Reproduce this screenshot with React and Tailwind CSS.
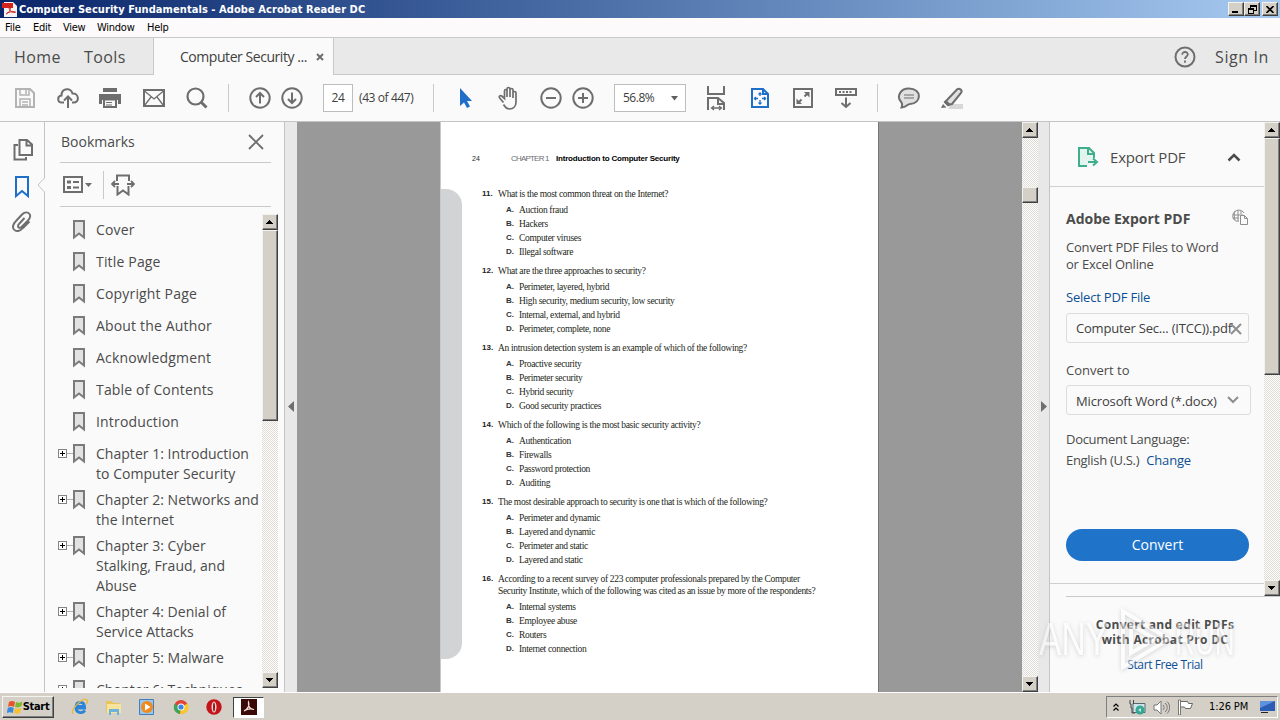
import clsx from 'clsx'

const BOOKMARKS = [
  { lines: ['Cover'] },
  { lines: ['Title Page'] },
  { lines: ['Copyright Page'] },
  { lines: ['About the Author'] },
  { lines: ['Acknowledgment'] },
  { lines: ['Table of Contents'] },
  { lines: ['Introduction'] },
  { lines: ['Chapter 1: Introduction', 'to Computer Security'], children: true },
  { lines: ['Chapter 2: Networks and', 'the Internet'], children: true },
  { lines: ['Chapter 3: Cyber', 'Stalking, Fraud, and', 'Abuse'], children: true },
  { lines: ['Chapter 4: Denial of', 'Service Attacks'], children: true },
  { lines: ['Chapter 5: Malware'], children: true },
  { lines: ['Chapter 6: Techniques'], children: true },
]

const QUESTIONS = [
  {
    n: 11,
    text: ['What is the most common threat on the Internet?'],
    options: ['Auction fraud', 'Hackers', 'Computer viruses', 'Illegal software'],
  },
  {
    n: 12,
    text: ['What are the three approaches to security?'],
    options: [
      'Perimeter, layered, hybrid',
      'High security, medium security, low security',
      'Internal, external, and hybrid',
      'Perimeter, complete, none',
    ],
  },
  {
    n: 13,
    text: ['An intrusion detection system is an example of which of the following?'],
    options: ['Proactive security', 'Perimeter security', 'Hybrid security', 'Good security practices'],
  },
  {
    n: 14,
    text: ['Which of the following is the most basic security activity?'],
    options: ['Authentication', 'Firewalls', 'Password protection', 'Auditing'],
  },
  {
    n: 15,
    text: ['The most desirable approach to security is one that is which of the following?'],
    options: ['Perimeter and dynamic', 'Layered and dynamic', 'Perimeter and static', 'Layered and static'],
  },
  {
    n: 16,
    text: [
      'According to a recent survey of 223 computer professionals prepared by the Computer',
      'Security Institute, which of the following was cited as an issue by more of the respondents?',
    ],
    options: ['Internal systems', 'Employee abuse', 'Routers', 'Internet connection'],
  },
]

function Icon({ w, h, className, children }) {
  return (
    <svg
      width={w}
      height={h}
      viewBox={`0 0 ${w} ${h}`}
      fill="none"
      stroke="#6e6e6e"
      strokeWidth="2"
      className={clsx('shrink-0', className)}
    >
      {children}
    </svg>
  )
}

/* classic 3d button used by the scrollbars and the window controls */
function Bevel({ className, children }) {
  return (
    <div
      className={clsx(
        'flex shrink-0 items-center justify-center border border-t-[#f4f2ee] border-r-[#404040] border-b-[#404040] border-l-[#f4f2ee] bg-[#d4d0c8] shadow-[inset_-1px_-1px_0_#808080]',
        className,
      )}
    >
      {children}
    </div>
  )
}

function Arrow({ down }) {
  return (
    <svg width="8" height="4" viewBox="0 0 8 4" shapeRendering="crispEdges">
      <path d={down ? 'M0 0h7v1h-1v1h-1v1h-1v1h-1v-1h-1v-1h-1v-1h-1z' : 'M3 0h1v1h1v1h1v1h1v1h-7v-1h1v-1h1v-1h1z'} fill="#000" />
    </svg>
  )
}

function Scrollbar({ className, before, thumb }) {
  return (
    <div
      className={clsx(
        'flex w-4 shrink-0 flex-col bg-[repeating-conic-gradient(#ffffff_0_25%,#dedad4_0_50%)] bg-[length:2px_2px]',
        className,
      )}
    >
      <Bevel className="h-4 w-4"><Arrow /></Bevel>
      <div className={clsx('shrink-0', before)} />
      <Bevel className={clsx('w-4', thumb)} />
      <div className="grow" />
      <Bevel className="h-4 w-4"><Arrow down /></Bevel>
    </div>
  )
}

function TitleBar() {
  return (
    <div className="flex h-[18px] items-center bg-linear-to-r from-[#0a246a] to-[#a6caf0] pr-[2px] pl-[2px]">
      <svg width="16" height="16" viewBox="0 0 16 16" className="shrink-0">
        <path d="M2 1h9l4 4v11H2z" fill="#f4f2f2" />
        <path d="M0 2h11v5H0z" fill="#d3221c" />
        <path d="M4 13c4-2 5-5 4-7M7 7c1 4 4 5 7 4M5 12c3-1 5-2 8-1" stroke="#d3221c" fill="none" />
      </svg>
      <span className="mt-px ml-[1px] font-['DejaVu_Sans_Condensed','DejaVu_Sans',sans-serif] text-[11px] leading-4 font-bold tracking-[0.07px] whitespace-pre text-white">
        Computer Security Fundamentals - Adobe Acrobat Reader DC
      </span>
      <div className="ml-auto flex">
        <Bevel className="h-[14px] w-4">
          <svg width="8" height="8" viewBox="0 0 8 8"><path d="M0 6h6v2H0z" /></svg>
        </Bevel>
        <Bevel className="h-[14px] w-4">
          <svg width="9" height="9" viewBox="0 0 9 9" fill="none" stroke="#000" shapeRendering="crispEdges">
            <path d="M2.5 3V.5h6v5H6M2 1.5h7M.5 8.5v-5h5v5zM0 4.500h6" />
          </svg>
        </Bevel>
        <Bevel className="ml-[2px] h-[14px] w-4">
          <svg width="8" height="7" viewBox="0 0 8 7" stroke="#000" strokeWidth="1.6"><path d="M.5 0l7 7M7.500 0l-7 7" /></svg>
        </Bevel>
      </div>
    </div>
  )
}

function MenuBar() {
  return (
    <div className="flex h-[20px] items-center border-b border-[#c9c9c9] bg-[#fcfafa] pt-[2px] pl-[5px] font-['DejaVu_Sans_Condensed','DejaVu_Sans',sans-serif] text-[11px] tracking-[-0.25px] text-black">
      <span className="w-7">File</span>
      <span className="w-[30px]">Edit</span>
      <span className="w-[34px]">View</span>
      <span className="w-[50px]">Window</span>
      <span>Help</span>
    </div>
  )
}

function TabBar() {
  return (
    <div className="flex h-[37px] text-[#4b4b4b]">
      <div className="flex w-[154px] items-center border-r border-b border-[#c9c9c9] bg-[#e9e9e9] pt-px pl-[14px] text-base font-medium tracking-[0.4px]">
        <span className="w-[70px]">Home</span>
        <span>Tools</span>
      </div>
      <div className="flex w-[179px] items-center bg-[#fafafa] pl-[26px] text-sm text-[#404040]">
        <span className="mt-px w-[136px] tracking-[-0.45px] whitespace-nowrap">Computer Security ...</span>
        <svg width="8" height="8" viewBox="0 0 8 8" stroke="#6e6e6e" strokeWidth="2"><path d="M1 1l6 6M7 1L1 7" /></svg>
      </div>
      <div className="flex grow items-center border-b border-l border-[#c9c9c9] bg-[#e9e9e9] pt-px pr-[11px]">
        <Icon w={22} h={22} className="ml-auto">
          <circle cx="11" cy="11" r="9.500" />
          <path d="M8.200 8.700c0-3.700 5.800-3.400 5.600-.2C13.700 10.600 11 10.300 11 13M11 14.500v2.300" strokeWidth="1.800" />
        </Icon>
        <span className="ml-[19px] text-base tracking-[0.6px]">Sign In</span>
      </div>
    </div>
  )
}

function Toolbar() {
  return (
    <div className="flex h-[47px] items-center border-b border-[#c4c4c4] bg-[#fafafa] pl-[14px]">
      <Icon w={22} h={22}>
        <g stroke="#b3b3b3">
          <path d="M2 2h14l4 4v14H2z" />
          <path d="M6 2v6h9V2M12 3v4M6 20v-8h10v8M8 15h6M8 18h6" strokeWidth="1.500" />
        </g>
      </Icon>
      <Icon w={24} h={24} className="ml-5">
        <path d="M8 16.500H6C1 16.500 1 10 5.500 9.500 5.500 2 15 1 16.500 7.500c6.500-.5 7.500 9 1 9H16" />
        <path d="M12 22V11M8 14.500l4-4 4 4" />
      </Icon>
      <Icon w={24} h={22} className="ml-[18px]">
        <path d="M5 1h14v4H5zM1 7h22v10h-3v-4H4v4H1z" fill="#6e6e6e" stroke="none" />
        <path d="M6 12.500h12V20H6z" fill="#fafafa" />
        <path d="M8 15.500h6M8 18h6" strokeWidth="1" />
      </Icon>
      <Icon w={24} h={20} className="ml-5">
        <path d="M2 2h20v16H2z" />
        <path d="M2.500 3l9.500 8 9.500-8M2.500 17.500L9 9M21.500 17.500L15 9" strokeWidth="1.300" />
      </Icon>
      <Icon w={22} h={22} className="ml-5">
        <circle cx="9.500" cy="9.500" r="8" strokeWidth="2.200" />
        <path d="M14.500 14.500l6 6" strokeWidth="3" />
      </Icon>
      <div className="ml-5 h-7 w-px bg-[#c9c9c9]" />
      <Icon w={22} h={22} className="ml-5">
        <circle cx="11" cy="11" r="9.700" />
        <path d="M11 16.500V6M7 10l4-4 4 4" />
      </Icon>
      <Icon w={22} h={22} className="ml-[10px]">
        <circle cx="11" cy="11" r="9.700" />
        <path d="M11 5.500V16M7 12l4 4 4-4" />
      </Icon>
      <div className="ml-5 flex h-7 w-[30px] items-center justify-center border border-[#bdbdbd] bg-white text-xs tracking-[-0.3px] text-[#404040]">24</div>
      <span className="ml-[6px] w-[74px] text-xs tracking-[-0.4px] whitespace-nowrap text-[#404040]">(43 of 447)</span>
      <div className="h-7 w-px bg-[#c9c9c9]" />
      <Icon w={14} h={22} className="ml-[25px]">
        <path d="M1 1v18l4-3.500 3 5.500 3-1.500-3-5.500h5z" fill="#1f6fc9" stroke="none" />
      </Icon>
      <Icon w={24} h={24} className="ml-6">
        <path
          d="M6.500 16.500L2.700 12c-1.500-2 .8-3 2-2l2.800 2.500V5c0-2 2.500-2 2.500 0v6V3c0-2 3-2 3 0v8-7c0-2 3-2 3 0v8-5c0-2 3-2 3 0v9c0 4-2.500 7-6.500 7-3 0-4.500-2-6-4.500"
          strokeWidth="1.700"
        />
      </Icon>
      <Icon w={22} h={22} className="ml-[19px]">
        <circle cx="11" cy="11" r="9.700" />
        <path d="M6 11h10" />
      </Icon>
      <Icon w={22} h={22} className="ml-[10px]">
        <circle cx="11" cy="11" r="9.700" />
        <path d="M6 11h10M11 6v10" />
      </Icon>
      <div className="ml-5 flex h-7 w-[72px] items-center border border-[#bdbdbd] bg-white pl-2 text-xs text-[#404040]">
        <span className="tracking-[-0.5px]">56.8%</span>
        <svg width="7" height="5" viewBox="0 0 7 5" className="mr-[7px] ml-auto"><path d="M0 0h7L3.500 4.500z" fill="#5e5e5e" /></svg>
      </div>
      <Icon w={20} h={26} className="ml-[20px]">
        <path d="M2 1v8h16V1M2 25V13h10l6 5v7M12 13v6h6" />
        <path d="M6 23h9M8 21l-2.500 2L8 25M13 21l2.500 2-2.500 2" strokeWidth="1.300" />
      </Icon>
      <Icon w={20} h={22} className="ml-[24px]">
        <g stroke="#1f6fc9">
          <path d="M2 2h11l5 5v13H2zM13 2v5h5" />
          <path d="M10 6v3M10 13v4M4.500 11.500H8M12 11.500h4" strokeWidth="1.300" />
          <path d="M8.500 7.500L10 6l1.500 1.500M8.500 15.500L10 17l1.500-1.500M6 10l-1.500 1.500L6 13M14 10l1.500 1.500L14 13" strokeWidth="1.300" />
        </g>
      </Icon>
      <Icon w={22} h={22} className="ml-[22px]">
        <path d="M2 2h18v18H2z" />
        <path d="M12 5h5.500v5.500zM4.500 11.500V17H10z" fill="#6e6e6e" stroke="none" />
        <path d="M12.500 9.500L15 7M9.500 12.500L7 15" />
      </Icon>
      <Icon w={24} h={22} className="ml-5">
        <path d="M2 2h20v6H2z" />
        <path d="M5 5h14" strokeDasharray="2 1.500" />
        <path d="M12 10.500v9M7.500 16l4.500 4 4.500-4" />
      </Icon>
      <div className="ml-[19px] h-7 w-px bg-[#c9c9c9]" />
      <Icon w={24} h={22} className="ml-[19px]">
        <path d="M4.500 15.500C-1 10 3 1.500 12 1.500c13 0 13 15 1 15.500-3 0-3 3.500-8.500 3.500 1-2 1-3 0-5z" fill="#e1e1e1" />
        <path d="M7 8h10M7 11h10" strokeWidth="1.200" />
      </Icon>
      <Icon w={24} h={22} className="ml-[19px]">
        <path d="M11 17h12v5H8z" fill="#d8d8d8" stroke="none" />
        <path d="M7 13L17 2.500c2-2 6 .5 4 3.500l-9 11-4 1-3-3z" fill="#e1e1e1" />
        <path d="M6 13l5 4.500-3 2-4-4zM3 17l3.500 3.500-5.500.5z" fill="#6e6e6e" stroke="none" />
      </Icon>
    </div>
  )
}

function NavRail() {
  return (
    <div className="relative flex w-[45px] shrink-0 flex-col items-center border-r border-[#c4c4c4] bg-[#fafafa] pt-4">
      <Icon w={20} h={24} className="ml-[2px]">
        <path d="M6.500 2h7.500l5 4.500V17H6.500zM13.500 2.500V7.500H19M5 7H1.500v14.500H13V19" />
      </Icon>
      <Icon w={16} h={24} className="mt-[13px]">
        <path d="M2 2h12v19l-6-5-6 5z" stroke="#1f6fc9" />
      </Icon>
      <Icon w={20} h={22} className="mt-3">
        <path d="M17.500 10.500L11 17c-3 3.500-7 4-9 1.500s-1-5.500 2-8.500l6-6.500c3-3 6-2.500 7.500-.5s.5 4.500-2 7L10 15.500c-3 3-5.500 0-3-2.500L12.500 7" strokeWidth="1.900" />
      </Icon>
      {/* notch that points from the panel to the active rail icon */}
      <svg width="8" height="16" viewBox="0 0 8 16" className="absolute top-[55px] -right-px">
        <path d="M8 0L1 8l7 8z" fill="#fafafa" />
        <path d="M7.500 0v1L1 8l6.500 7v1" fill="none" stroke="#c4c4c4" />
      </svg>
    </div>
  )
}

function BookmarkItem({ item }) {
  return (
    <div className="flex min-h-8 pt-[6px]">
      <div className="flex w-[15px] shrink-0 pt-[5px]">
        {item.children && (
          <svg width="15" height="9" viewBox="0 0 15 9" fill="none" shapeRendering="crispEdges">
            <path d="M.5.5h8v8h-8z" fill="#fff" stroke="#848484" />
            <path d="M2 4.500h5M4.500 2v5" stroke="#000" />
            <path d="M9 4.500h6" stroke="#b0b0b0" />
          </svg>
        )}
      </div>
      <svg width="12" height="20" viewBox="0 0 12 20" className="shrink-0">
        <path d="M1 1h10v16.500l-5-4-5 4z" fill="#e2e2e2" stroke="#7a7a7a" strokeWidth="2" />
      </svg>
      <div
        className={clsx(
          'ml-[11px] text-sm leading-5 whitespace-nowrap text-[#4b4b4b]',
          item.children ? 'tracking-[0.03px]' : 'tracking-[0.17px]',
        )}
      >
        {item.lines.map((line) => (
          <div key={line}>{line}</div>
        ))}
      </div>
    </div>
  )
}

function BookmarksPanel() {
  return (
    <div className="flex w-[239px] shrink-0 flex-col bg-[#fafafa] pl-[13px]">
      <div className="mr-[13px] ml-[2px] flex h-[41px] items-center justify-between border-b border-[#c9c9c9] pr-[7px]">
        <span className="ml-px text-sm text-[#4b4b4b]">Bookmarks</span>
        <Icon w={16} h={16}><path d="M1 1l14 14M15 1L1 15" strokeWidth="1.800" /></Icon>
      </div>
      <div className="mr-[13px] ml-[2px] flex h-11 items-center border-b border-[#c9c9c9] pl-[3px]">
        <Icon w={29} h={18}>
          <path d="M1 1h18v15H1z" />
          <path d="M4 6h4M4 11.500h4" strokeWidth="3" />
          <path d="M10 6h6M10 11.500h6" strokeWidth="1.800" />
          <path d="M22 7h7l-3.500 4z" fill="#6e6e6e" stroke="none" />
        </Icon>
        <div className="ml-[11px] h-7 w-px bg-[#c9c9c9]" />
        <Icon w={24} h={22} className="ml-[7px]">
          <path d="M6 7V1.500h12V7M6.500 12v8.500l5.500-4 5.500 4V12" />
          <path d="M1 10h7M16 10h7M4 7l-3 3 3 3M20 7l3 3-3 3" strokeWidth="1.800" />
        </Icon>
      </div>
      <div className="mt-[7px] mb-1 flex h-[474px] overflow-hidden">
        <div className="w-[204px] shrink-0">
          {BOOKMARKS.map((item) => (
            <BookmarkItem key={item.lines[0]} item={item} />
          ))}
        </div>
        <Scrollbar before="h-0" thumb="h-[191px]" />
      </div>
    </div>
  )
}

function Splitter({ left }) {
  return (
    <div
      className={clsx(
        'flex shrink-0 items-center border-[#c4c4c4] bg-[#e8e8e8]',
        left ? 'w-[13px] border-l pl-[3px]' : 'w-3 border-r pl-[3px]',
      )}
    >
      <svg width="7" height="12" viewBox="0 0 7 12">
        <path d={left ? 'M6 0v11L0 5.500z' : 'M0 0v11l6-5.500z'} fill="#6e6e6e" />
      </svg>
    </div>
  )
}

function Question({ q }) {
  return (
    <div className="mb-[6px]">
      <div className="flex leading-3">
        <span className="w-[16px] font-['Liberation_Sans',sans-serif] text-[8px] font-bold tracking-normal text-[#222]">{q.n}.</span>
        <div>
          {q.text.map((line) => (
            <div key={line}>{line}</div>
          ))}
        </div>
      </div>
      <div className="mt-[3px] ml-6 leading-[14px]">
        {q.options.map((option, i) => (
          <div key={option} className="flex">
            <span className="w-[13px] font-['Liberation_Sans',sans-serif] text-[8px] font-bold tracking-normal text-[#333]">{'ABCD'[i]}.</span>
            <span>{option}</span>
          </div>
        ))}
      </div>
    </div>
  )
}

function DocumentView() {
  return (
    <div className="flex w-[725px] shrink-0 bg-[#999999] pl-[143px]">
      <div className="flex w-[439px] border-r border-l border-[#c9c9c9] border-r-[#777] bg-white">
        <div className="mt-[67px] h-[470px] w-[21px] shrink-0 rounded-r-[16px] bg-[#d1d3d4]" />
        <div className="pl-[20px] font-['Liberation_Serif',serif] text-[9.5px] tracking-[-0.33px] whitespace-nowrap text-[#231f20]">
          <div className="-ml-[10px] flex h-[66px] items-center pt-[7px] font-['Liberation_Sans',sans-serif] text-[8px] leading-3 tracking-normal">
            <span className="w-[39px] text-[7px]">24</span>
            <span className="w-[45px] tracking-[-0.8px] text-[#6d6e71]">CHAPTER 1</span>
            <span className="font-bold tracking-[-0.2px] text-black">Introduction to Computer Security</span>
          </div>
          {QUESTIONS.map((q) => (
            <Question key={q.n} q={q} />
          ))}
        </div>
      </div>
    </div>
  )
}

function ExportPanel() {
  return (
    <div className="flex w-[230px] shrink-0 flex-col bg-[#fafafa] text-[#4b4b4b]">
      <div className="flex h-[474px]">
        <div className="w-[214px] shrink-0 text-[13px] tracking-[-0.2px] whitespace-nowrap">
          <div className="flex h-[65px] items-center border-b border-[#cfcfcf] pt-[6px] pl-[27px]">
            <Icon w={22} h={22}>
              <g stroke="#3fae8c">
                <path d="M17 12V7l-5-5H2v18h8" fill="#e3f3ee" />
                <path d="M11 2v6h6" />
                <path d="M11 16h8M16 12.500l4 3.500-4 3.500" />
              </g>
            </Icon>
            <span className="ml-[11px] w-[117px] text-[15px]">Export PDF</span>
            <Icon w={14} h={9}><path d="M1.500 7.500L7 2l5.500 5.500" strokeWidth="2.500" stroke="#4b4b4b" /></Icon>
          </div>
          <div className="pr-[15px] pl-4">
            <div className="flex h-[64px] items-center justify-between">
              <span className="text-sm font-bold tracking-normal">Adobe Export PDF</span>
              <svg width="17" height="16" viewBox="0 0 17 16" fill="none" stroke="#8e8e8e" className="mb-[5px]">
                <path d="M7 12C2 13 0 9 1 5c2-5 9-5 11-1M1 6h10M1 9h6M6 1v11M3 2c-1 3-1 6 0 9M9 2v3" />
                <path d="M8.500 6.500h4l3 3v6h-7zM12.500 6.500v3h3" fill="#fafafa" />
              </svg>
            </div>
            <div className="-mt-3 leading-[17px]">
              <div>Convert PDF Files to Word</div>
              <div>or Excel Online</div>
            </div>
            <div className="mt-4 leading-[17px] text-[#0d4f94]">Select PDF File</div>
            <div className="mt-[7px] flex h-[30px] items-center rounded-[3px] border border-[#dcdcdc] pt-px pl-[9px] text-[#404040]">
              <span className="w-[154px]">Computer Sec... (ITCC)).pdf</span>
              <svg width="12" height="12" viewBox="0 0 12 12" stroke="#8e8e8e" strokeWidth="2" className="shrink-0"><path d="M1 1l10 10M11 1L1 11" /></svg>
            </div>
            <div className="mt-[19px] leading-[17px] tracking-normal">Convert to</div>
            <div className="mt-[6px] -mr-[2px] flex h-[30px] items-center justify-between rounded-[3px] border border-[#dcdcdc] pr-[11px] pl-[9px] tracking-[-0.15px] text-[#404040]">
              <span className="mt-[3px]">Microsoft Word (*.docx)</span>
              <svg width="12" height="8" viewBox="0 0 12 8" fill="none" stroke="#8e8e8e" strokeWidth="2"><path d="M1 1l5 5 5-5" /></svg>
            </div>
            <div className="mt-[14px] leading-[21px] tracking-[-0.3px]">
              <div>Document Language:</div>
              <div>English (U.S.) <span className="ml-1 tracking-[-0.2px] text-[#0d4f94]">Change</span></div>
            </div>
            <div className="mt-[58px] flex h-8 items-center justify-center rounded-full bg-[#1f74c9] text-sm tracking-normal text-white">Convert</div>
          </div>
          <div className="mt-[22px] h-px bg-[#cfcfcf]" />
        </div>
        <Scrollbar before="h-0" thumb="h-[237px]" />
      </div>
      <div className="ml-4 h-px shrink-0 bg-[#c9c9c9]" />
      <div className="mt-[20px] text-center text-[12px] leading-[15px] font-bold tracking-[0.3px]">
        <div>Convert and edit PDFs</div>
        <div>with Acrobat Pro DC</div>
      </div>
      <div className="mt-[10px] text-center text-xs leading-4 tracking-[-0.4px] text-[#0d4f94]">Start Free Trial</div>
    </div>
  )
}

function Watermark() {
  return (
    <div className="absolute top-[606px] left-[1039px] flex h-[66px] items-center font-['Liberation_Sans',sans-serif] text-[46px] text-white opacity-50 [filter:drop-shadow(0_1px_2px_#aaa)]">
      <span className="w-[70px] origin-left scale-x-[0.73]">ANY</span>
      <svg width="66" height="66" viewBox="0 0 66 66" fill="none" stroke="#fff" strokeWidth="4" className="shrink-0">
        <path d="M14 5v56l46-28zM22 19v28l24-14z" />
      </svg>
      <span className="origin-left scale-x-[0.6]">RUN</span>
    </div>
  )
}

function Taskbar() {
  return (
    <div className="flex h-7 items-center border-t border-white bg-[#d4d0c8] pt-px pr-[2px] pl-[2px] font-['DejaVu_Sans_Condensed','DejaVu_Sans',sans-serif] text-[11px] text-black">
      <Bevel className="h-[22px] w-[52px]">
        <svg width="16" height="14" viewBox="0 0 16 14">
          <path d="M2 2c2-1.500 4-1 6 0L7 7C5 6 3 5.500 1 7z" fill="#e8542a" />
          <path d="M9 2c2 1 4 1 6.500-.5L14.500 6c-2 1.500-4 1.500-6.500 1z" fill="#7cb82f" />
          <path d="M.8 8c2-1.500 4-1 6 0l-1 5c-2-1-4-1-6 0z" fill="#3a8bdc" />
          <path d="M8 8c2 1 4 1 6.300-.5l-1 5c-2 1.500-4 1.500-6.300.5z" fill="#f8c12d" />
        </svg>
        <span className="mt-px font-bold tracking-[-0.3px]">Start</span>
      </Bevel>
      <div className="ml-[17px] flex items-center gap-[15.5px]">
        <svg width="18" height="18" viewBox="0 0 18 18" fill="none">
          <path d="M15 10H5c0 5 6 6 9 2.500M5 8.500h8.500C13 3 5.500 3 5 8.500" stroke="#2c84d8" strokeWidth="2.800" />
          <path d="M2 16C-1 12 11-1 16 2c1 1 0 3-1 4" stroke="#e9b93a" strokeWidth="1.300" />
        </svg>
        <svg width="18" height="18" viewBox="0 0 18 18">
          <path d="M1 3h6l1 2h7v10H1z" fill="#e8c45a" />
          <path d="M2 6h14v9H2z" fill="#f7e39c" />
          <path d="M4 11h10v6h-2v-3H6v3H4z" fill="#6bb3dc" />
        </svg>
        <svg width="18" height="18" viewBox="0 0 18 18">
          <path d="M1.500 1.500h14v15h-14z" fill="#9cc5ec" stroke="#3f7fc0" />
          <circle cx="9" cy="9" r="6" fill="#f08a1c" />
          <path d="M7 5.500v7L12.500 9z" fill="#fff" />
        </svg>
        <svg width="18" height="18" viewBox="0 0 18 18">
          <circle cx="9" cy="9" r="7" fill="#e04436" />
          <path d="M9 9L2.500 6A7 7 0 0 0 8 16z" fill="#3ba757" />
          <path d="M9 9l6.500-3.500A7 7 0 0 1 8 16z" fill="#f7c92f" />
          <circle cx="9" cy="9" r="3.500" fill="#fff" />
          <circle cx="9" cy="9" r="2.600" fill="#3f82e8" />
        </svg>
        <svg width="18" height="18" viewBox="0 0 18 18">
          <circle cx="9" cy="9" r="7.700" fill="#c4141a" />
          <ellipse cx="9" cy="9" rx="2.500" ry="5.500" fill="#e9dcd8" />
          <ellipse cx="9" cy="9" rx="1" ry="4.500" fill="#a01014" />
        </svg>
      </div>
      <div className="ml-[10px] flex h-[21px] w-[31px] items-center justify-center border border-t-[#404040] border-r-white border-b-white border-l-[#404040] bg-white">
        <svg width="16" height="16" viewBox="0 0 16 16">
          <path d="M0 0h16v16H0z" fill="#3b0a08" />
          <path d="M3 12c4-2 6-6 4.500-9C7 7 9 10 13 10.500 10 9.500 6 10 3 12z" stroke="#f1dcd8" strokeWidth="1.200" fill="none" />
        </svg>
      </div>
      <div className="ml-auto flex h-[22px] w-[172px] items-center border border-t-[#808080] border-r-white border-b-white border-l-[#808080] pl-[6px]">
        <svg width="6" height="8" viewBox="0 0 6 8" fill="none" stroke="#000" strokeWidth="1.200" className="shrink-0"><path d="M.5 3.500L3 1l2.500 2.500M.5 7.500L3 5l2.500 2.500" /></svg>
        <svg width="17" height="17" viewBox="0 0 17 17" className="ml-[10px] shrink-0">
          <path d="M4 4.500h12v9H4z" fill="#cfe3ea" stroke="#55686e" />
          <path d="M1 1v4h1v4h1v5h3M4.500 1v4" stroke="#444" fill="none" />
          <circle cx="11" cy="11" r="4.500" fill="#37a795" />
          <path d="M9 11l3-2v4z" fill="#bfeadb" />
        </svg>
        <svg width="17" height="15" viewBox="0 0 17 15" fill="none" stroke="#777" className="ml-[7px] shrink-0">
          <path d="M1 5h3l4-4v13l-4-4H1z" fill="#fff" />
          <path d="M10 5c1.500 1.500 1.500 3.500 0 5M12 3c3 2.500 3 6.500 0 9M14 1.500c3.500 3 3.500 9 0 12" />
        </svg>
        <svg width="17" height="16" viewBox="0 0 17 16" className="ml-[7px] shrink-0">
          <path d="M3.500 2.500h7l1 2h4l-2 5h-5l-1-1.500h-4" fill="#fff" stroke="#666" />
          <path d="M1.500 1v15h2V1z" fill="#fff" stroke="#777" />
        </svg>
        <span className="mt-px ml-[15px] w-[41px] tracking-[-0.1px] whitespace-nowrap">1:26 PM</span>
        <svg width="15" height="14" viewBox="0 0 15 14" className="ml-[10px] shrink-0">
          <path d="M0 1h15v10H0z" fill="#2c5cb4" />
          <path d="M0 1h15L0 8z" fill="#5f91dc" />
          <path d="M1 12h7v1H1z" fill="#222" />
        </svg>
      </div>
    </div>
  )
}

export default function App() {
  return (
    <div className="relative flex h-[720px] w-[1280px] flex-col overflow-hidden bg-[#fafafa] font-['Open_Sans',sans-serif]">
      <TitleBar />
      <MenuBar />
      <TabBar />
      <Toolbar />
      <div className="flex h-[570px] shrink-0">
        <NavRail />
        <BookmarksPanel />
        <Splitter left />
        <DocumentView />
        <Scrollbar before="h-[49px]" thumb="h-4" />
        <Splitter />
        <ExportPanel />
      </div>
      <Taskbar />
      <Watermark />
    </div>
  )
}
